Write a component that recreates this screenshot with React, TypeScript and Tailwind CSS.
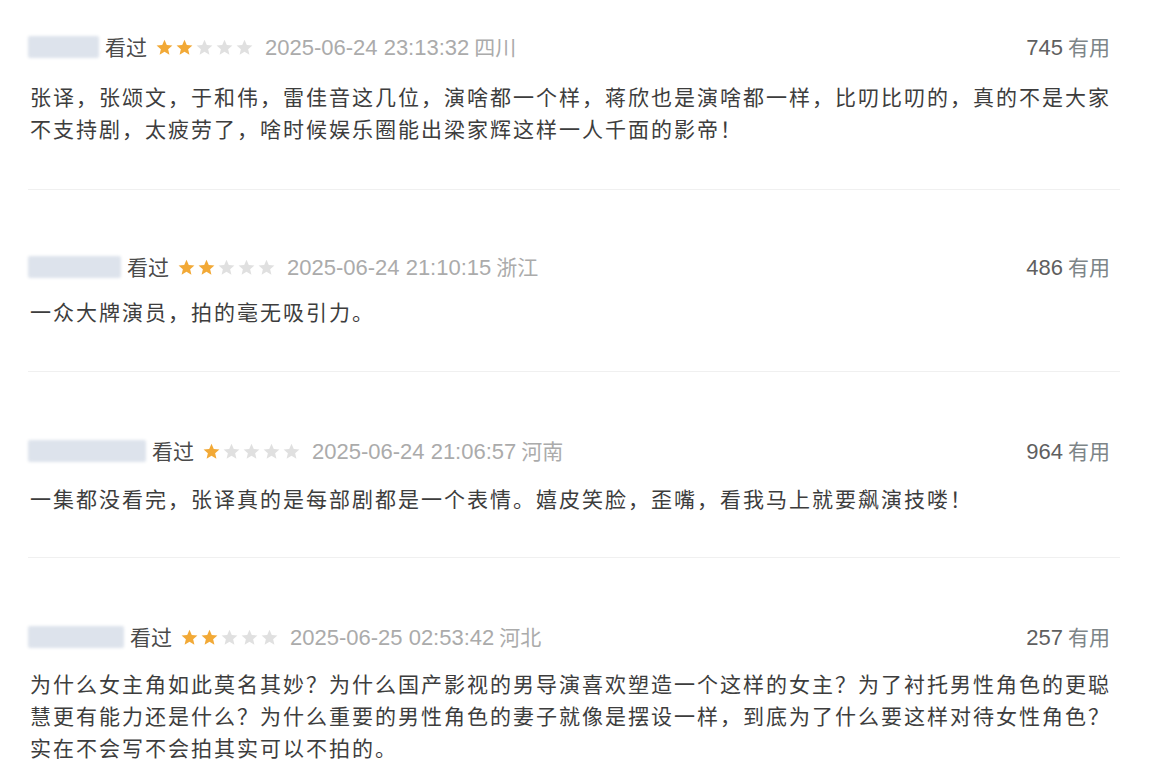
import React from "react";

type Review = {
  blur: number;
  rating: number;
  date: string;
  place: string;
  useful: number;
  text: string;
  pt: string;
  mt: string;
  pb: string;
};

const reviews: Review[] = [
  {
    blur: 71,
    rating: 2,
    date: "2025-06-24 23:13:32",
    place: "四川",
    useful: 745,
    text: "张译，张颂文，于和伟，雷佳音这几位，演啥都一个样，蒋欣也是演啥都一样，比叨比叨的，真的不是大家不支持剧，太疲劳了，啥时候娱乐圈能出梁家辉这样一人千面的影帝！",
    pt: "pt-[32px]",
    mt: "mt-[18px]",
    pb: "pb-[45px]",
  },
  {
    blur: 93,
    rating: 2,
    date: "2025-06-24 21:10:15",
    place: "浙江",
    useful: 486,
    text: "一众大牌演员，拍的毫无吸引力。",
    pt: "pt-[62px]",
    mt: "mt-[13px]",
    pb: "pb-[44px]",
  },
  {
    blur: 118,
    rating: 1,
    date: "2025-06-24 21:06:57",
    place: "河南",
    useful: 964,
    text: "一集都没看完，张译真的是每部剧都是一个表情。嬉皮笑脸，歪嘴，看我马上就要飙演技喽！",
    pt: "pt-[64px]",
    mt: "mt-[16px]",
    pb: "pb-[43px]",
  },
  {
    blur: 96,
    rating: 2,
    date: "2025-06-25 02:53:42",
    place: "河北",
    useful: 257,
    text: "为什么女主角如此莫名其妙？为什么国产影视的男导演喜欢塑造一个这样的女主？为了衬托男性角色的更聪慧更有能力还是什么？为什么重要的男性角色的妻子就像是摆设一样，到底为了什么要这样对待女性角色？实在不会写不会拍其实可以不拍的。",
    pt: "pt-[64px]",
    mt: "mt-[15px]",
    pb: "pb-[42px]",
  },
];

function Star({ filled }: { filled: boolean }) {
  return (
    <svg width="19" height="19" viewBox="0 0 24 24" className="shrink-0">
      <path
        d="M12 2.2l2.9 6.6 7.1.6-5.4 4.7 1.6 7-6.2-3.7-6.2 3.7 1.6-7L2 9.4l7.1-.6z"
        fill={filled ? "#f2a936" : "#e0e0e0"}
      />
    </svg>
  );
}

function Item({ r }: { r: Review }) {
  return (
    <div className={`border-b border-[#f0f0f0] ${r.pt} ${r.pb}`}>
      <div className="flex h-[30px] items-center justify-between pr-[10px]">
        <div className="flex items-center">
          <div
            className="h-[22px] rounded-[2px] bg-[#dde3ec] blur-[1.5px]"
            style={{ width: r.blur }}
          />
          <span className="ml-[6px] text-[21px] text-[#4a4a4a] [font-family:'Noto_Sans_CJK_SC',sans-serif]">
            看过
          </span>
          <div className="ml-[8px] flex items-center gap-[1px]">
            {[0, 1, 2, 3, 4].map((i) => (
              <Star key={i} filled={i < r.rating} />
            ))}
          </div>
          <span className="ml-[11px] text-[22px] text-[#ababab] [font-family:'Liberation_Sans',Arial,sans-serif]">
            {r.date}
          </span>
          <span className="ml-[5px] text-[21px] text-[#ababab] [font-family:'Noto_Sans_CJK_SC',sans-serif]">
            {r.place}
          </span>
        </div>
        <div className="flex items-center">
          <span className="text-[22px] text-[#5f5f5f] [font-family:'Liberation_Sans',Arial,sans-serif]">
            {r.useful}
          </span>
          <span className="ml-[5px] text-[21px] text-[#7d8588] [font-family:'Noto_Sans_CJK_SC',sans-serif]">
            有用
          </span>
        </div>
      </div>
      <p
        className={`${r.mt} w-[1090px] pl-[2px] text-[21px] leading-[32px] tracking-[2px] text-[#3d3d3d] [font-family:'Noto_Sans_CJK_SC',sans-serif]`}
      >
        {r.text}
      </p>
    </div>
  );
}

export default function App() {
  return (
    <div className="h-[779px] w-[1170px] overflow-hidden bg-white">
      <div className="ml-[28px] w-[1092px]">
        {reviews.map((r, i) => (
          <Item key={i} r={r} />
        ))}
      </div>
    </div>
  );
}
